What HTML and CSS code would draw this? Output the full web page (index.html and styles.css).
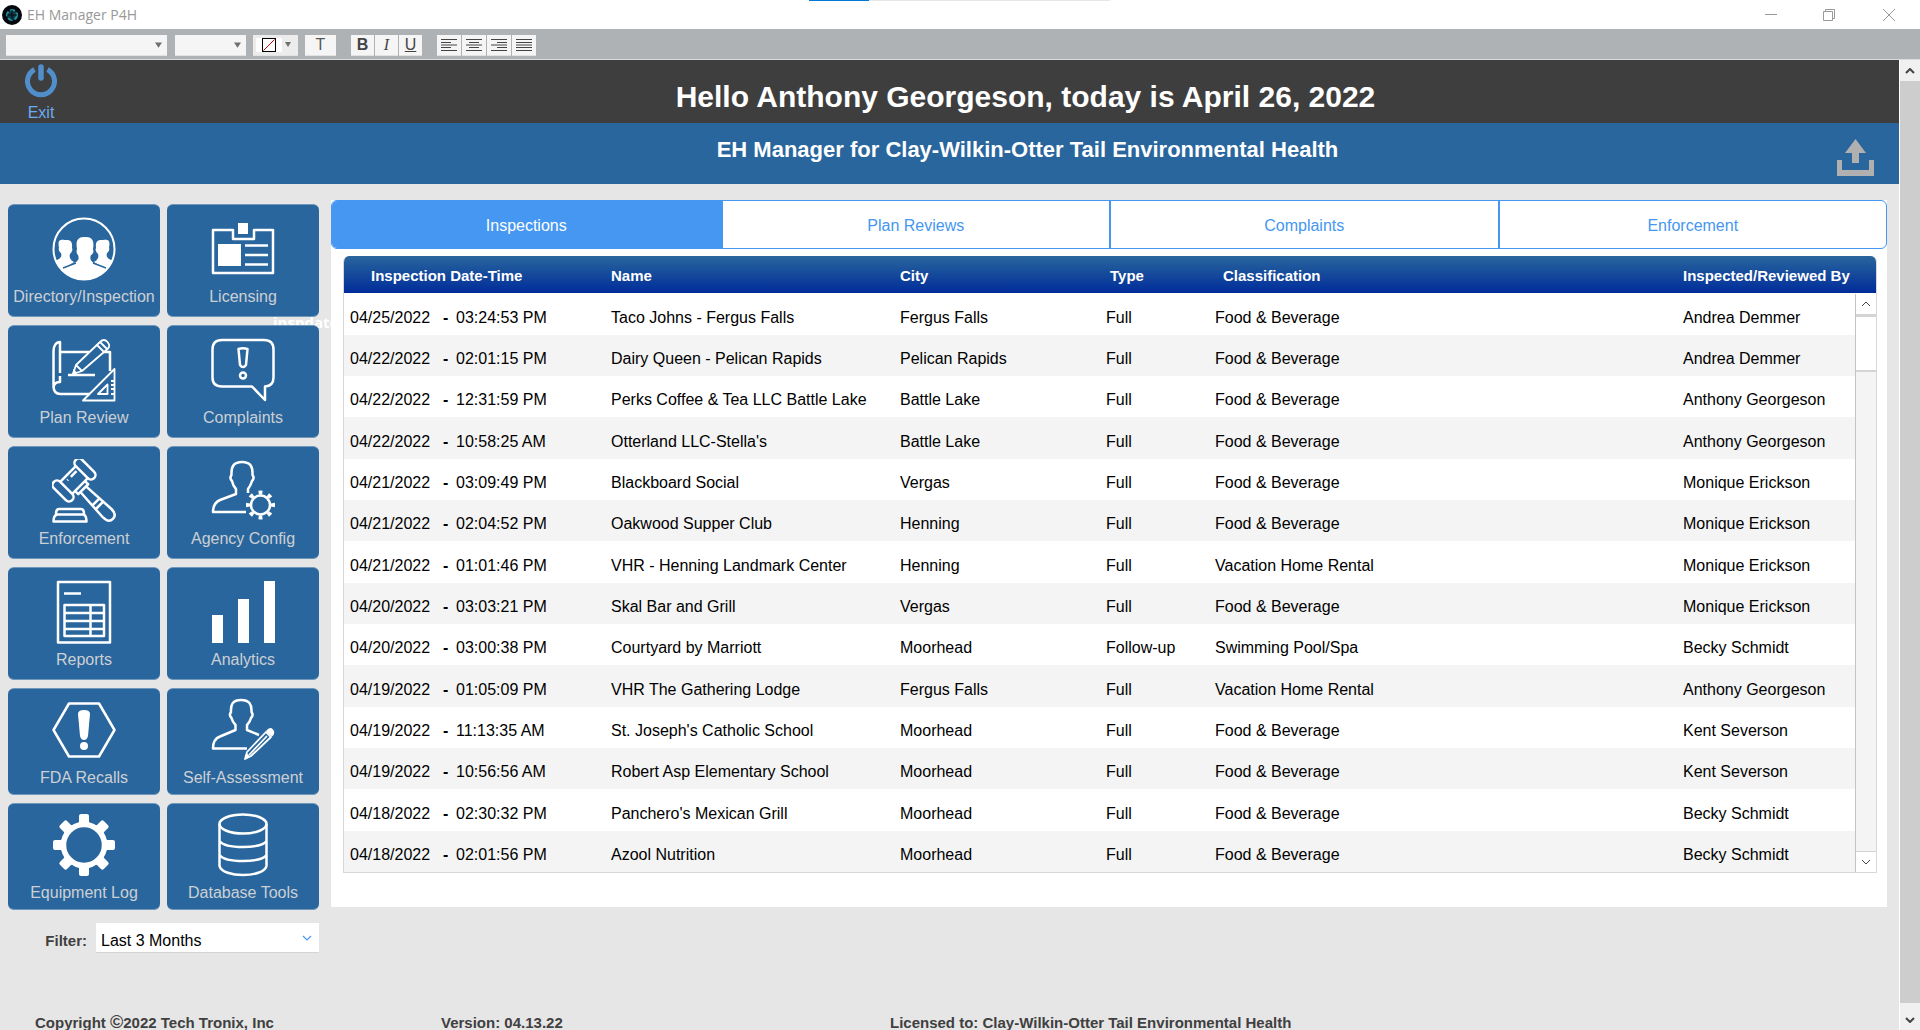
FILE: index.html
```html
<!DOCTYPE html>
<html lang="en">
<head>
    <meta charset="UTF-8">
    <meta name="viewport" content="width=device-width, initial-scale=1.0">
    <title>EH Manager P4H</title>
    <link rel="stylesheet" href="styles.css">
</head>
<body>
    <div class="titlebar">
        <svg class="app-icon" viewBox="0 0 20 20">
            <circle cx="10" cy="10" r="10" fill="#05080c"/>
            <circle cx="10" cy="10" r="5" fill="#0e3a48" stroke="#2391a5" stroke-width="2" stroke-dasharray="5 2"/>
            <path d="M10 5v10M5 10h10" stroke="#05080c"/>
        </svg>
        <span class="app-name">EH Manager P4H</span>
        <div class="window-buttons">
            <button aria-label="Minimize"><svg viewBox="0 0 12 12"><path d="M0 5.5h12"/></svg></button>
            <button aria-label="Restore"><svg viewBox="0 0 12 12"><path d="M.5 2.5h9v9h-9zM2.500 2.500v-2h9v9h-2"/></svg></button>
            <button aria-label="Close"><svg viewBox="0 0 12 12"><path d="M0 0l12 12M12 0L0 12"/></svg></button>
        </div>
        <div class="progress"></div>
    </div>

    <div class="toolbar">
        <select class="font-family" aria-label="Font"><option></option></select>
        <select class="font-size" aria-label="Size"><option></option></select>
        <button class="fill" aria-label="Color">
            <svg viewBox="0 0 45 20">
                <rect x="3" y="3" width="26" height="14" fill="#fff"/>
                <rect x="9.500" y="3.500" width="13" height="13" fill="#fff" stroke="#000"/>
                <path d="M10.500 15.500L21.500 4.500" stroke="#d00000"/>
                <path d="M32 7h6l-3 5z" fill="#6f6f6f"/>
            </svg>
        </button>
        <button class="text-style">T</button>
        <div class="group">
            <button class="bold">B</button>
            <button class="italic">I</button>
            <button class="underline">U</button>
        </div>
        <div class="group align">
            <button aria-label="Align left"><svg viewBox="0 0 16 12"><path d="M0 .5h16M0 3.500h10M0 6h16M0 8.500h10M0 11.500h16"/></svg></button>
            <button aria-label="Align center"><svg viewBox="0 0 16 12"><path d="M0 .5h16M3 3.500h10M0 6h16M3 8.500h10M0 11.500h16"/></svg></button>
            <button aria-label="Align right"><svg viewBox="0 0 16 12"><path d="M0 .5h16M6 3.500h10M0 6h16M6 8.500h10M0 11.500h16"/></svg></button>
            <button aria-label="Justify"><svg viewBox="0 0 16 12"><path d="M0 .5h16M0 3.500h16M0 6h16M0 8.500h16M0 11.500h16"/></svg></button>
        </div>
    </div>

    <div class="viewport">
        <div class="page">
            <header class="greeting">
                <button class="exit">
                    <svg viewBox="0 0 32 34">
                        <path d="M9.500 5.500a13.500 13.500 0 1 0 13 0" fill="none" stroke="#508fcb" stroke-width="5"/>
                        <path d="M16 3v11" stroke="#508fcb" stroke-width="5.500" stroke-linecap="round"/>
                    </svg>
                    <span>Exit</span>
                </button>
                <h1>Hello Anthony Georgeson, today is April 26, 2022</h1>
            </header>
            <div class="agency">
                <h2>EH Manager for Clay-Wilkin-Otter Tail Environmental Health</h2>
                <button class="upload" aria-label="Upload">
                    <svg viewBox="0 0 37 37"><path d="M18.500 0L29 14h-7v10h-7V14H8zM0 21h5v10h27V21h5v16H0z" fill="#b0b0b0"/></svg>
                </button>
            </div>

            <main class="content">
                <aside class="sidebar">
                    <span class="sort-field">inspdate</span>
                    <nav class="menu">
                        <button class="tile">
                            <svg viewBox="0 0 64 64">
                                <clipPath id="round"><circle cx="32" cy="32" r="31"/></clipPath>
                                <circle cx="32" cy="32" r="30.500" stroke-width="2"/>
                                <g clip-path="url(#round)" class="solid">
                                    <path d="M7 31c-2-10 3-8 6-8s8-1 7 8c1 2 0 4-2 6-1 3 0 6 4 8l-12 8L0 46l5-3c4-2 5-4 4-7-1-1-3-3-2-5z"/>
                                    <path d="M57 31c2-10-3-8-6-8s-8-1-7 8c-1 2 0 4 2 6 1 3 0 6-4 8l12 8 10-7-5-3c-4-2-5-4-4-7 1-1 3-3 2-5z"/>
                                    <path d="M25 32c-2-11 3-12 8-12s10 1 8 12c1 3 0 5-2 6-2 5 1 7 5 9l14 6v12H6V53l14-6c5-2 8-4 6-9-1-1-2-3-1-6z"/>
                                    <path d="M11 51l13-5M41 46l13 5" stroke="#29669d" stroke-width="1.500"/>
                                </g>
                            </svg>
                            <span>Directory/Inspection</span>
                        </button>
                        <button class="tile">
                            <svg viewBox="0 0 64 64">
                                <path d="M2 13h20v9h21v-9h19v43H2z"/>
                                <path class="solid" d="M27 6h10v11H27zM7 27h23v22H7z"/>
                                <path d="M34 28.500h23M34 38h23M34 47.500h23"/>
                            </svg>
                            <span>Licensing</span>
                        </button>
                        <button class="tile">
                            <svg viewBox="0 0 64 64">
                                <path d="M8 35V4c-4 0-6.500 4-6.500 9v35c0 5 2.500 8 7 8H38M8 38v6c-4 0-6.500 2-6.500 6M8 14h29M51 14h7v19M16 37h27"/>
                                <path d="M21 36l3-9L48 4q4-4 7.500 0t0 7L30 33zM24 27l6 6M45 7l7 7M48 4l7 7" stroke-width="1.800"/>
                                <path class="solid" d="M20 37l1.500-6 4 4z"/>
                                <path d="M31 62.500h31.500V31zM46 56h9.500V46.500zM59 43h3M59 47h3M59 51h3M59 56h3" stroke-width="1.800"/>
                            </svg>
                            <span>Plan Review</span>
                        </button>
                        <button class="tile">
                            <svg viewBox="0 0 64 64">
                                <path d="M11 2h42q9.500 0 9.500 9.500v28q0 8.500-8.500 9V62L41 48.500H11q-9.500 0-9.500-9v-28Q1.500 2 11 2z"/>
                                <path d="M27.500 11q4.500-1.500 9 0l-1.500 16q-3 4-6 0z"/>
                                <circle cx="32" cy="37.500" r="3"/>
                            </svg>
                            <span>Complaints</span>
                        </button>
                        <button class="tile">
                            <svg viewBox="0 0 64 64">
                                <g transform="translate(22 21) rotate(-45)">
                                    <rect x="-20" y="-13" width="9" height="26" rx="4.500"/>
                                    <rect x="11" y="-13" width="9" height="26" rx="4.500"/>
                                    <path d="M-11-8.500h22M-11 8.500h22M0-4.500h8M-5-4.500h1M-7 9v4h14V9"/>
                                    <path d="M-4 13l-2 34q0 8 6 8t6-8L4 13M-5 31H5M-5 36H5"/>
                                </g>
                                <path d="M1.500 62.500h33q0-6-3-7H5q-3.500 1-3.500 7zM4 55q0-5 3-5h22q3 0 3 5"/>
                            </svg>
                            <span>Enforcement</span>
                        </button>
                        <button class="tile">
                            <svg viewBox="0 0 64 64">
                                <path d="M37 34v-4q3-4 4-8c2-2 2-4 .5-6C42 7 39 3 31 3s-11 4-10.500 13c-1.500 2-1.500 4 .5 6q1 5 4 8v5L9 41q-7 3-7 12h33"/>
                                <circle cx="49.500" cy="46" r="9.500"/>
                                <circle cx="49.500" cy="46" r="12.500" pathLength="80" stroke-dasharray="4 6" stroke-dashoffset="2" stroke-width="4"/>
                            </svg>
                            <span>Agency Config</span>
                        </button>
                        <button class="tile">
                            <svg viewBox="0 0 64 64">
                                <path d="M6 2h52v60.500H6zM12 13.500h17M12.500 25H52v31H12.500zM12.500 33H52M12.500 41H52M12.500 49H52M38.500 25v31"/>
                            </svg>
                            <span>Reports</span>
                        </button>
                        <button class="tile">
                            <svg viewBox="0 0 64 64">
                                <path class="solid" d="M1 35h11v28H1zM27 19h11v44H27zM53 1h11v62H53z"/>
                            </svg>
                            <span>Analytics</span>
                        </button>
                        <button class="tile compact">
                            <svg viewBox="0 0 64 64">
                                <path d="M1.500 32L17 5.500h30L62.500 32 47 58.500H17z"/>
                                <path class="solid" d="M26 16q0-4 6-4t6 4l-2 22q-1 4-4 4t-4-4z"/>
                                <circle class="solid" cx="32" cy="48" r="4"/>
                            </svg>
                            <span>FDA Recalls</span>
                        </button>
                        <button class="tile compact">
                            <svg viewBox="0 0 64 64">
                                <path d="M48 37l-12-5v-5q3-3 4-7c2-2 2-4 .5-6C41 6 38 2 30 2S19.500 6 20 14c-1.500 2-1.500 4 .5 6q1 4 4 7v5L9 38.500Q2 41 2 50.500h34"/>
                                <path d="M34 61l2-7 19-20 5 5-20 19zM38 57l18-19" stroke-width="1.800"/>
                                <path class="solid" d="M34 61l1.500-6 4 4zM55 33q4-5 7-1.500t-1 7z"/>
                            </svg>
                            <span>Self-Assessment</span>
                        </button>
                        <button class="tile compact">
                            <svg viewBox="0 0 64 64">
                                <circle cx="32" cy="32" r="20.500" stroke-width="5.500"/>
                                <g class="solid">
                                    <path id="tooth" d="M25 11l2-2V3q0-2 2-2h6q2 0 2 2v6l2 2z"/>
                                    <use href="#tooth" transform="rotate(45 32 32)"/>
                                    <use href="#tooth" transform="rotate(90 32 32)"/>
                                    <use href="#tooth" transform="rotate(135 32 32)"/>
                                    <use href="#tooth" transform="rotate(180 32 32)"/>
                                    <use href="#tooth" transform="rotate(225 32 32)"/>
                                    <use href="#tooth" transform="rotate(270 32 32)"/>
                                    <use href="#tooth" transform="rotate(315 32 32)"/>
                                </g>
                            </svg>
                            <span>Equipment Log</span>
                        </button>
                        <button class="tile compact">
                            <svg viewBox="0 0 64 64">
                                <ellipse cx="32" cy="11" rx="23.500" ry="9.500"/>
                                <path d="M8.500 11v42c3 12 44 12 47 0V11M8.500 28c6 8 41 8 47 0M8.500 42c6 8 41 8 47 0"/>
                            </svg>
                            <span>Database Tools</span>
                        </button>
                    </nav>
                    <div class="filter">
                        <label for="period">Filter:</label>
                        <select id="period">
                            <option>Last 3 Months</option>
                        </select>
                    </div>
                </aside>

                <section class="panel">
                    <div class="tabs">
                        <button class="active">Inspections</button>
                        <button>Plan Reviews</button>
                        <button>Complaints</button>
                        <button>Enforcement</button>
                    </div>
                    <div class="list">
                        <table>
                            <colgroup>
                                <col class="col-date">
                                <col class="col-name">
                                <col class="col-city">
                                <col class="col-type">
                                <col>
                                <col class="col-by">
                            </colgroup>
                            <thead>
                                <tr>
                                    <th class="th-date">Inspection Date-Time</th>
                                    <th>Name</th>
                                    <th>City</th>
                                    <th class="th-type">Type</th>
                                    <th class="th-class">Classification</th>
                                    <th>Inspected/Reviewed By</th>
                                </tr>
                            </thead>
                            <tbody>
                                <tr><td><span class="day">04/25/2022</span><b>-</b>03:24:53 PM</td><td>Taco Johns - Fergus Falls</td><td>Fergus Falls</td><td>Full</td><td>Food &amp; Beverage</td><td>Andrea Demmer</td></tr>
                                <tr><td><span class="day">04/22/2022</span><b>-</b>02:01:15 PM</td><td>Dairy Queen - Pelican Rapids</td><td>Pelican Rapids</td><td>Full</td><td>Food &amp; Beverage</td><td>Andrea Demmer</td></tr>
                                <tr><td><span class="day">04/22/2022</span><b>-</b>12:31:59 PM</td><td>Perks Coffee &amp; Tea LLC Battle Lake</td><td>Battle Lake</td><td>Full</td><td>Food &amp; Beverage</td><td>Anthony Georgeson</td></tr>
                                <tr><td><span class="day">04/22/2022</span><b>-</b>10:58:25 AM</td><td>Otterland LLC-Stella's</td><td>Battle Lake</td><td>Full</td><td>Food &amp; Beverage</td><td>Anthony Georgeson</td></tr>
                                <tr><td><span class="day">04/21/2022</span><b>-</b>03:09:49 PM</td><td>Blackboard Social</td><td>Vergas</td><td>Full</td><td>Food &amp; Beverage</td><td>Monique Erickson</td></tr>
                                <tr><td><span class="day">04/21/2022</span><b>-</b>02:04:52 PM</td><td>Oakwood Supper Club</td><td>Henning</td><td>Full</td><td>Food &amp; Beverage</td><td>Monique Erickson</td></tr>
                                <tr><td><span class="day">04/21/2022</span><b>-</b>01:01:46 PM</td><td>VHR - Henning Landmark Center</td><td>Henning</td><td>Full</td><td>Vacation Home Rental</td><td>Monique Erickson</td></tr>
                                <tr><td><span class="day">04/20/2022</span><b>-</b>03:03:21 PM</td><td>Skal Bar and Grill</td><td>Vergas</td><td>Full</td><td>Food &amp; Beverage</td><td>Monique Erickson</td></tr>
                                <tr><td><span class="day">04/20/2022</span><b>-</b>03:00:38 PM</td><td>Courtyard by Marriott</td><td>Moorhead</td><td>Follow-up</td><td>Swimming Pool/Spa</td><td>Becky Schmidt</td></tr>
                                <tr><td><span class="day">04/19/2022</span><b>-</b>01:05:09 PM</td><td>VHR The Gathering Lodge</td><td>Fergus Falls</td><td>Full</td><td>Vacation Home Rental</td><td>Anthony Georgeson</td></tr>
                                <tr><td><span class="day">04/19/2022</span><b>-</b>11:13:35 AM</td><td>St. Joseph's Catholic School</td><td>Moorhead</td><td>Full</td><td>Food &amp; Beverage</td><td>Kent Severson</td></tr>
                                <tr><td><span class="day">04/19/2022</span><b>-</b>10:56:56 AM</td><td>Robert Asp Elementary School</td><td>Moorhead</td><td>Full</td><td>Food &amp; Beverage</td><td>Kent Severson</td></tr>
                                <tr><td><span class="day">04/18/2022</span><b>-</b>02:30:32 PM</td><td>Panchero's Mexican Grill</td><td>Moorhead</td><td>Full</td><td>Food &amp; Beverage</td><td>Becky Schmidt</td></tr>
                                <tr><td><span class="day">04/18/2022</span><b>-</b>02:01:56 PM</td><td>Azool Nutrition</td><td>Moorhead</td><td>Full</td><td>Food &amp; Beverage</td><td>Becky Schmidt</td></tr>
                            </tbody>
                        </table>
                        <div class="list-scroll">
                            <button aria-label="Scroll list up"><svg viewBox="0 0 10 6"><path d="M1 5l4-4 4 4"/></svg></button>
                            <div class="track"><div class="thumb"></div></div>
                            <button aria-label="Scroll list down"><svg viewBox="0 0 10 6"><path d="M1 1l4 4 4-4"/></svg></button>
                        </div>
                    </div>
                </section>
            </main>

            <footer class="footer">
                <span>Copyright <span class="copy">&copy;</span>2022 Tech Tronix, Inc</span>
                <span>Version: 04.13.22</span>
                <span>Licensed to: Clay-Wilkin-Otter Tail Environmental Health</span>
            </footer>
        </div>

        <div class="page-scroll">
            <button class="up" aria-label="Scroll up"><svg viewBox="0 0 10 6"><path d="M1 5l4-4 4 4"/></svg></button>
            <div class="thumb"></div>
            <button class="down" aria-label="Scroll down"><svg viewBox="0 0 10 6"><path d="M1 1l4 4 4-4"/></svg></button>
        </div>
    </div>
</body>
</html>
```

FILE: styles.css
```css
* {
    margin: 0;
    padding: 0;
    box-sizing: border-box;
}

body {
    height: 100vh;
    display: flex;
    flex-direction: column;
    overflow: hidden;
    font-family: "Liberation Sans", Arial, sans-serif;
    font-size: 16px;
    color: #000;
    background: #e6e6e6;
}

button,
select {
    font: inherit;
    color: inherit;
    border: none;
    border-radius: 0;
    background: none;
    appearance: none;
}

svg {
    display: block;
    fill: none;
}

/* window title bar */
.titlebar {
    position: relative;
    flex: none;
    display: flex;
    align-items: center;
    height: 29px;
    padding-left: 2px;
    background: #fff;
}

.app-icon {
    width: 20px;
    height: 20px;
}

.app-name {
    margin-left: 5px;
    font-family: "Open Sans", sans-serif;
    font-size: 14px;
    color: #999;
}

.window-buttons {
    display: flex;
    margin-left: auto;
}

.window-buttons button {
    width: 58px;
    height: 28px;
    display: flex;
    align-items: center;
    justify-content: center;
}

.window-buttons button:last-child {
    width: 62px;
}

.window-buttons svg {
    width: 12px;
    height: 12px;
    stroke: #999;
}

.progress {
    position: absolute;
    top: 0;
    left: 809px;
    width: 301px;
    height: 1px;
    background: linear-gradient(to right, #0078d7 60px, #e6e6e6 60px);
}

/* formatting toolbar */
.toolbar {
    flex: none;
    display: flex;
    align-items: center;
    height: 31px;
    padding: 2px 0 0 6px;
    background: #aeb2b5;
    border-bottom: 1px solid #dcdcdc;
}

.toolbar select,
.toolbar button {
    height: 21px;
    background: #f5f5f5;
    border-bottom: 1px solid #e2e2e2;
}

.toolbar select {
    background: #f5f5f5 url("data:image/svg+xml,%3Csvg xmlns='http://www.w3.org/2000/svg' viewBox='0 0 8 6'%3E%3Cpath d='M0 0h8L4 6z' fill='%23707070'/%3E%3C/svg%3E") no-repeat right 5px center / 7px 6px;
}

.toolbar .font-family {
    width: 161px;
    margin-right: 8px;
}

.toolbar .font-size {
    width: 71px;
    margin-right: 7px;
}

.toolbar .fill {
    width: 45px;
    margin-right: 7px;
    background: #ececec;
}

.toolbar .text-style {
    width: 31px;
    margin-right: 15px;
    color: #555;
}

.group {
    display: flex;
    gap: 1px;
    margin-right: 15px;
    color: #444;
}

.group button {
    width: 23px;
    display: flex;
    align-items: center;
    justify-content: center;
}

.group button.bold {
    font-weight: bold;
}

.group button.italic {
    font-family: "Liberation Serif", serif;
    font-style: italic;
}

.group button.underline {
    text-decoration: underline;
}

.group.align button {
    width: 24px;
}

.group svg {
    width: 16px;
    height: 12px;
    stroke: #444;
}

/* page */
.viewport {
    flex: 1;
    display: flex;
    min-height: 0;
}

.page {
    flex: 1;
    min-width: 0;
    overflow: hidden;
}

.greeting {
    display: grid;
    grid-template-columns: 152px 1fr;
    align-items: center;
    height: 63px;
    background: #3e3e3e;
}

.exit {
    width: 82px;
    display: flex;
    flex-direction: column;
    align-items: center;
    gap: 6px;
    padding-top: 3px;
    line-height: 18px;
    color: #6cabf2;
}

.exit svg {
    width: 32px;
    height: 34px;
}

h1,
h2 {
    text-align: center;
    color: #fff;
}

h1 {
    padding-top: 10px;
    font-size: 30px;
}

h2 {
    align-self: start;
    padding-top: 14px;
    font-size: 22px;
    line-height: 26px;
}

.agency {
    display: grid;
    grid-template-columns: 204px 1fr 48px;
    height: 61px;
    background: #29669d;
}

.agency h2 {
    grid-column: 2;
}

.upload {
    align-self: end;
    padding-bottom: 8px;
}

.upload svg {
    width: 37px;
    height: 37px;
    margin-left: -14px;
}

.content {
    display: flex;
    align-items: flex-start;
    gap: 12px;
    padding: 16px 12px 0 8px;
}

/* menu tiles */
.sidebar {
    position: relative;
    flex: none;
    width: 311px;
    padding-top: 4px;
}

.sort-field {
    position: absolute;
    top: 114px;
    left: 265px;
    font-family: "Open Sans", sans-serif;
    font-size: 15px;
    font-weight: bold;
    line-height: 16px;
    color: #fff;
}

.menu {
    position: relative;
    display: grid;
    grid-template-columns: 1fr 1fr;
    gap: 8px 7px;
}

.tile {
    display: flex;
    flex-direction: column;
    align-items: center;
    gap: 6px;
    height: 113px;
    padding-top: 12px;
    border: 1px solid #6f97bc;
    border-width: 1px 0;
    border-radius: 6px;
    background: #29669d;
    color: #ccd0d4;
    line-height: 20px;
    white-space: nowrap;
    cursor: pointer;
}

.tile.compact {
    height: 107px;
    padding-top: 9px;
}

.tile svg {
    width: 64px;
    height: 64px;
    stroke: #fff;
    stroke-width: 2.5;
    stroke-linejoin: round;
}

.tile .solid {
    fill: #fff;
    stroke: none;
}

.filter {
    display: flex;
    align-items: center;
    justify-content: flex-end;
    gap: 9px;
    margin-top: 13px;
}

.filter label {
    padding-top: 4px;
    font-size: 15px;
    font-weight: bold;
    color: #404040;
}

.filter select {
    width: 223px;
    height: 30px;
    padding: 6px 5px 0;
    background: #fff url("data:image/svg+xml,%3Csvg xmlns='http://www.w3.org/2000/svg' viewBox='0 0 10 6'%3E%3Cpath d='M1 1l4 4 4-4' fill='none' stroke='%234597f1' stroke-width='1.2'/%3E%3C/svg%3E") no-repeat right 7px center / 10px 6px;
    border-bottom: 1px solid #d4d4d4;
}

/* inspections panel */
.panel {
    position: relative;
    flex: 1;
    min-width: 0;
    padding-bottom: 34px;
    background: #fff;
}

.tabs {
    display: grid;
    grid-template-columns: repeat(4, 1fr);
    height: 49px;
    border: 1px solid #4597f1;
    border-radius: 6px;
    overflow: hidden;
}

.tabs button {
    padding-top: 2px;
    color: #4597f1;
    border-left: 2px solid #4597f1;
    cursor: pointer;
}

.tabs button:first-child {
    border-left: none;
}

.tabs .active {
    background: #4597f1;
    color: #fff;
}

.list {
    position: relative;
    margin: 7px 10px 0 12px;
}

table {
    width: 100%;
    table-layout: fixed;
    border-spacing: 0;
    border: 1px solid #d8d8d8;
    border-top: none;
    border-radius: 6px 6px 0 0;
    overflow: hidden;
}

.col-date {
    width: 261px;
}

.col-name {
    width: 289px;
}

.col-city {
    width: 206px;
}

.col-type {
    width: 109px;
}

.col-by {
    width: 199px;
}

thead {
    background: linear-gradient(#29669d, #002c9a);
}

th,
td {
    padding-left: 6px;
    text-align: left;
    white-space: nowrap;
}

th {
    height: 37px;
    padding-top: 2px;
    font-size: 15px;
    color: #fff;
}

.th-date {
    padding-left: 27px;
}

.th-type {
    padding-left: 10px;
}

.th-class {
    padding-left: 14px;
}

td {
    height: 41px;
    padding-top: 7px;
}

tr:nth-child(3n + 1) td {
    height: 42px;
}

tbody tr:nth-child(even) {
    background: #f4f4f4;
}

.day {
    display: inline-block;
    width: 93px;
}

td b {
    display: inline-block;
    width: 13px;
}

.list-scroll {
    position: absolute;
    top: 38px;
    right: 1px;
    bottom: 1px;
    width: 21px;
    display: flex;
    flex-direction: column;
    background: #f4f4f4;
    border-left: 1px solid #c4c4c4;
}

.list-scroll button {
    height: 20px;
    display: flex;
    align-items: center;
    justify-content: center;
    background: #fff;
}

.list-scroll svg,
.page-scroll svg {
    width: 10px;
    height: 6px;
    stroke: #444;
}

.list-scroll .track {
    flex: 1;
    border: solid #d4d4d4;
    border-width: 3px 0 1px;
}

.list-scroll .thumb {
    height: 55px;
    background: #fff;
    border-bottom: 2px solid #d4d4d4;
}

.footer {
    display: grid;
    grid-template-columns: 406px 449px 1fr;
    align-items: baseline;
    margin-top: 60px;
    padding-left: 35px;
    font-size: 15px;
    font-weight: bold;
    line-height: 18px;
    color: #404040;
}

.copy {
    font-size: 18px;
}

/* page scrollbar */
.page-scroll {
    flex: none;
    width: 21px;
    display: flex;
    flex-direction: column;
    background: #f0f0f0;
    border-left: 1px solid #fff;
}

.page-scroll button {
    display: flex;
    align-items: center;
    justify-content: center;
}

.page-scroll svg {
    stroke-width: 2;
}

.page-scroll .up {
    height: 21px;
}

.page-scroll .down {
    height: 27px;
    padding-top: 6px;
}

.page-scroll .thumb {
    flex: 1;
    background: #cdcdcd;
}
```
